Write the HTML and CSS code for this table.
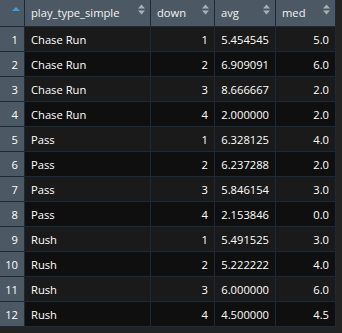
FILE: index.html
```html
<!DOCTYPE html>
<html>
<head>
<meta charset="utf-8">
<link rel="stylesheet" href="styles.css">
</head>
<body>
<div class="table">
  <div class="row head">
    <div class="cell num corner"><span class="sort-active"></span></div>
    <div class="cell">play_type_simple<svg class="sort" width="7" height="11" viewBox="0 0 7 11"><path d="M0 4.5L3.5 0.5L7 4.5Z M0 6.5L7 6.5L3.5 10.5Z"/></svg></div>
    <div class="cell">down<svg class="sort" width="7" height="11" viewBox="0 0 7 11"><path d="M0 4.5L3.5 0.5L7 4.5Z M0 6.5L7 6.5L3.5 10.5Z"/></svg></div>
    <div class="cell">avg<svg class="sort" width="7" height="11" viewBox="0 0 7 11"><path d="M0 4.5L3.5 0.5L7 4.5Z M0 6.5L7 6.5L3.5 10.5Z"/></svg></div>
    <div class="cell">med<svg class="sort" width="7" height="11" viewBox="0 0 7 11"><path d="M0 4.5L3.5 0.5L7 4.5Z M0 6.5L7 6.5L3.5 10.5Z"/></svg></div>
  </div>
  <div class="row odd"><div class="cell num">1</div><div class="cell">Chase Run</div><div class="cell r">1</div><div class="cell r">5.454545</div><div class="cell r">5.0</div></div>
  <div class="row even"><div class="cell num">2</div><div class="cell">Chase Run</div><div class="cell r">2</div><div class="cell r">6.909091</div><div class="cell r">6.0</div></div>
  <div class="row odd"><div class="cell num">3</div><div class="cell">Chase Run</div><div class="cell r">3</div><div class="cell r">8.666667</div><div class="cell r">2.0</div></div>
  <div class="row even"><div class="cell num">4</div><div class="cell">Chase Run</div><div class="cell r">4</div><div class="cell r">2.000000</div><div class="cell r">2.0</div></div>
  <div class="row odd"><div class="cell num">5</div><div class="cell">Pass</div><div class="cell r">1</div><div class="cell r">6.328125</div><div class="cell r">4.0</div></div>
  <div class="row even"><div class="cell num">6</div><div class="cell">Pass</div><div class="cell r">2</div><div class="cell r">6.237288</div><div class="cell r">2.0</div></div>
  <div class="row odd"><div class="cell num">7</div><div class="cell">Pass</div><div class="cell r">3</div><div class="cell r">5.846154</div><div class="cell r">3.0</div></div>
  <div class="row even"><div class="cell num">8</div><div class="cell">Pass</div><div class="cell r">4</div><div class="cell r">2.153846</div><div class="cell r">0.0</div></div>
  <div class="row odd"><div class="cell num">9</div><div class="cell">Rush</div><div class="cell r">1</div><div class="cell r">5.491525</div><div class="cell r">3.0</div></div>
  <div class="row even"><div class="cell num">10</div><div class="cell">Rush</div><div class="cell r">2</div><div class="cell r">5.222222</div><div class="cell r">4.0</div></div>
  <div class="row odd"><div class="cell num">11</div><div class="cell">Rush</div><div class="cell r">3</div><div class="cell r">6.000000</div><div class="cell r">6.0</div></div>
  <div class="row even"><div class="cell num">12</div><div class="cell">Rush</div><div class="cell r">4</div><div class="cell r">4.500000</div><div class="cell r">4.5</div></div>
</div>
</body>
</html>
```
FILE: styles.css
```css
html, body {
  margin: 0;
  padding: 0;
  background: #232323;
}
body {
  font-family: "Open Sans", "Noto Sans", sans-serif;
  font-size: 11.2px;
  color: #ffffff;
}
.table {
  display: flex;
  flex-direction: column;
  gap: 1px;
  width: max-content;
  background: #1b2a3a;
  padding: 0 1px 1px 0;
}
.row {
  display: grid;
  grid-template-columns: 24px 125px 63px 60px 59px;
  column-gap: 1px;
  height: 24px;
}
.row.head {
  height: 26px;
}
.cell {
  display: flex;
  align-items: center;
  padding: 0 6px;
  white-space: nowrap;
  overflow: hidden;
  position: relative;
}
.odd .cell { background: #1a1a1a; }
.even .cell { background: #0f0f0f; }
.head .cell {
  background: #4c5864;
  color: #f2f2f2;
  padding-bottom: 1px;
}
.row .cell.num {
  background: #4c5864;
  justify-content: flex-end;
  color: #ffffff;
}
.cell.r {
  justify-content: flex-end;
}
.sort {
  position: absolute;
  right: 5px;
  top: 4px;
  fill: #a9b0b7;
}
.sort-active {
  position: absolute;
  left: 12px;
  top: 7px;
  width: 0;
  height: 0;
  border-left: 4px solid transparent;
  border-right: 4px solid transparent;
  border-bottom: 4px solid #3d9be9;
}
```
